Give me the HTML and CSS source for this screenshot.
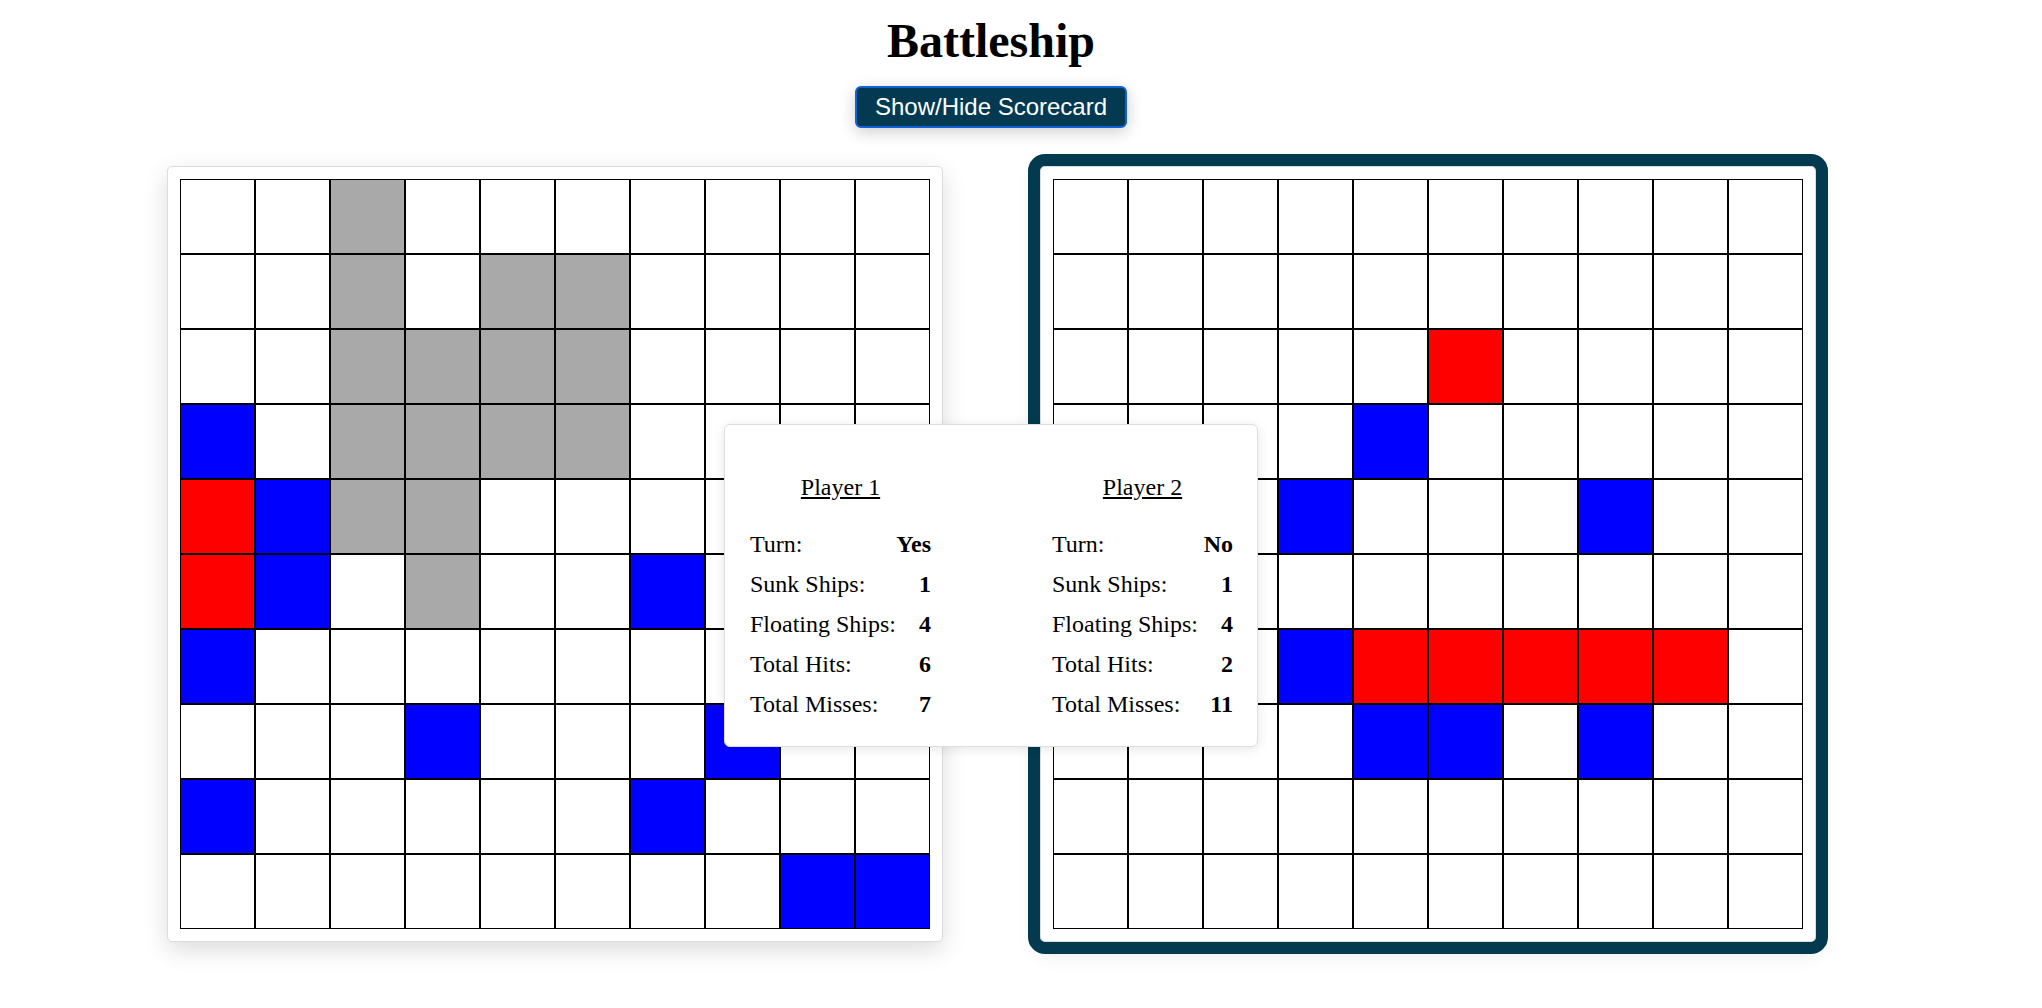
FILE: index.html
```html
<!DOCTYPE html>
<html lang="en">
<head>
<meta charset="utf-8">
<title>Battleship</title>
<link rel="stylesheet" href="styles.css">
</head>
<body>
<div class="page">
  <h1 class="title">Battleship</h1>
  <div class="controls">
    <button class="toggle" type="button">Show/Hide Scorecard</button>
  </div>
  <div class="boards">
    <div class="card">
      <div class="grid">
        <div class="c"></div><div class="c"></div><div class="c s"></div><div class="c"></div><div class="c"></div><div class="c"></div><div class="c"></div><div class="c"></div><div class="c"></div><div class="c"></div>
        <div class="c"></div><div class="c"></div><div class="c s"></div><div class="c"></div><div class="c s"></div><div class="c s"></div><div class="c"></div><div class="c"></div><div class="c"></div><div class="c"></div>
        <div class="c"></div><div class="c"></div><div class="c s"></div><div class="c s"></div><div class="c s"></div><div class="c s"></div><div class="c"></div><div class="c"></div><div class="c"></div><div class="c"></div>
        <div class="c m"></div><div class="c"></div><div class="c s"></div><div class="c s"></div><div class="c s"></div><div class="c s"></div><div class="c"></div><div class="c"></div><div class="c"></div><div class="c"></div>
        <div class="c h"></div><div class="c m"></div><div class="c s"></div><div class="c s"></div><div class="c"></div><div class="c"></div><div class="c"></div><div class="c"></div><div class="c"></div><div class="c"></div>
        <div class="c h"></div><div class="c m"></div><div class="c"></div><div class="c s"></div><div class="c"></div><div class="c"></div><div class="c m"></div><div class="c"></div><div class="c"></div><div class="c"></div>
        <div class="c m"></div><div class="c"></div><div class="c"></div><div class="c"></div><div class="c"></div><div class="c"></div><div class="c"></div><div class="c"></div><div class="c"></div><div class="c"></div>
        <div class="c"></div><div class="c"></div><div class="c"></div><div class="c m"></div><div class="c"></div><div class="c"></div><div class="c"></div><div class="c m"></div><div class="c"></div><div class="c"></div>
        <div class="c m"></div><div class="c"></div><div class="c"></div><div class="c"></div><div class="c"></div><div class="c"></div><div class="c m"></div><div class="c"></div><div class="c"></div><div class="c"></div>
        <div class="c"></div><div class="c"></div><div class="c"></div><div class="c"></div><div class="c"></div><div class="c"></div><div class="c"></div><div class="c"></div><div class="c m"></div><div class="c m"></div>
      </div>
    </div>
    <div class="card active">
      <div class="grid">
        <div class="c"></div><div class="c"></div><div class="c"></div><div class="c"></div><div class="c"></div><div class="c"></div><div class="c"></div><div class="c"></div><div class="c"></div><div class="c"></div>
        <div class="c"></div><div class="c"></div><div class="c"></div><div class="c"></div><div class="c"></div><div class="c"></div><div class="c"></div><div class="c"></div><div class="c"></div><div class="c"></div>
        <div class="c"></div><div class="c"></div><div class="c"></div><div class="c"></div><div class="c"></div><div class="c h"></div><div class="c"></div><div class="c"></div><div class="c"></div><div class="c"></div>
        <div class="c"></div><div class="c"></div><div class="c"></div><div class="c"></div><div class="c m"></div><div class="c"></div><div class="c"></div><div class="c"></div><div class="c"></div><div class="c"></div>
        <div class="c"></div><div class="c"></div><div class="c"></div><div class="c m"></div><div class="c"></div><div class="c"></div><div class="c"></div><div class="c m"></div><div class="c"></div><div class="c"></div>
        <div class="c"></div><div class="c"></div><div class="c"></div><div class="c"></div><div class="c"></div><div class="c"></div><div class="c"></div><div class="c"></div><div class="c"></div><div class="c"></div>
        <div class="c"></div><div class="c"></div><div class="c"></div><div class="c m"></div><div class="c h"></div><div class="c h"></div><div class="c h"></div><div class="c h"></div><div class="c h"></div><div class="c"></div>
        <div class="c"></div><div class="c"></div><div class="c"></div><div class="c"></div><div class="c m"></div><div class="c m"></div><div class="c"></div><div class="c m"></div><div class="c"></div><div class="c"></div>
        <div class="c"></div><div class="c"></div><div class="c"></div><div class="c"></div><div class="c"></div><div class="c"></div><div class="c"></div><div class="c"></div><div class="c"></div><div class="c"></div>
        <div class="c"></div><div class="c"></div><div class="c"></div><div class="c"></div><div class="c"></div><div class="c"></div><div class="c"></div><div class="c"></div><div class="c"></div><div class="c"></div>
      </div>
    </div>
  </div>
  <div class="scorecard">
    <div class="player">
      <div class="player-name">Player 1</div>
      <div class="stat"><span>Turn:</span><b>Yes</b></div>
      <div class="stat"><span>Sunk Ships:</span><b>1</b></div>
      <div class="stat"><span>Floating Ships:</span><b>4</b></div>
      <div class="stat"><span>Total Hits:</span><b>6</b></div>
      <div class="stat"><span>Total Misses:</span><b>7</b></div>
    </div>
    <div class="player">
      <div class="player-name">Player 2</div>
      <div class="stat"><span>Turn:</span><b>No</b></div>
      <div class="stat"><span>Sunk Ships:</span><b>1</b></div>
      <div class="stat"><span>Floating Ships:</span><b>4</b></div>
      <div class="stat"><span>Total Hits:</span><b>2</b></div>
      <div class="stat"><span>Total Misses:</span><b>11</b></div>
    </div>
  </div>
</div>
</body>
</html>
```

FILE: styles.css
```css
* { box-sizing: border-box; }

html, body {
  margin: 0;
  padding: 0;
  background: #ffffff;
}

body {
  font-family: "Liberation Serif", "Times New Roman", serif;
  color: #000;
}

.page {
  position: relative;
  display: flow-root;
  width: 1982px;
  padding-bottom: 40px;
}

.title {
  margin: 14px 0 0 0;
  font-size: 48px;
  line-height: 54px;
  font-weight: bold;
  text-align: center;
}

.controls {
  display: flex;
  justify-content: center;
  margin-top: 18px;
}

.toggle {
  font-family: "Liberation Sans", Arial, sans-serif;
  font-size: 24px;
  line-height: 28px;
  color: #ffffff;
  background: #033a51;
  border: 2px solid #0f62d8;
  border-radius: 6px;
  padding: 5px 18px;
  box-shadow: 0 4px 16px rgba(0, 0, 0, 0.2);
  cursor: pointer;
}

.boards {
  display: flex;
  justify-content: center;
  gap: 97px;
  margin-top: 38px;
}

.card {
  background: #fff;
  border: 1px solid #dcdcdc;
  border-radius: 5px;
  padding: 12px;
  box-shadow: 0 8px 24px rgba(0, 0, 0, 0.14);
}

.card.active {
  outline: 12px solid #033a4f;
}

.grid {
  display: grid;
  grid-template-columns: repeat(10, 75px);
  grid-template-rows: repeat(10, 75px);
}

.c {
  border: 1px solid #000;
  background: #fff;
}

.c.s { background: #a9a9a9; }
.c.h { background: #ff0000; }
.c.m { background: #0000ff; }

.scorecard {
  position: absolute;
  left: 724px;
  top: 424px;
  width: 534px;
  height: 323px;
  background: #fff;
  border: 1px solid #dedede;
  border-radius: 6px;
  box-shadow: 0 2px 12px rgba(0, 0, 0, 0.1);
  padding: 42px 24px 22px 25px;
  display: flex;
  gap: 121px;
  font-size: 24px;
}

.player {
  width: 181px;
}

.player-name {
  text-align: center;
  text-decoration: underline;
  line-height: 40px;
  margin-bottom: 17px;
}

.stat {
  display: flex;
  justify-content: space-between;
  line-height: 40px;
}

.stat b {
  font-weight: bold;
}
```
